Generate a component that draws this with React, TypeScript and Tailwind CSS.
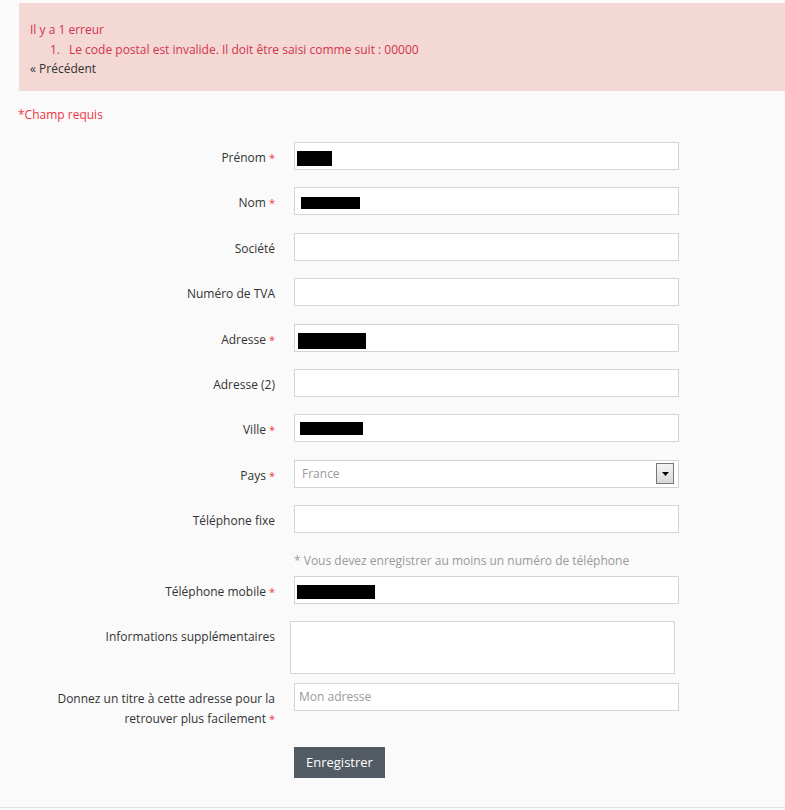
import React from "react";

const font = { fontFamily: '"Open Sans", "Liberation Sans", sans-serif' };

function Star() {
  return <span className="text-[#f13340] text-[11px] align-top ml-[3px]">*</span>;
}

function Row({
  label,
  required,
  children,
  className = "",
}: {
  label: React.ReactNode;
  required?: boolean;
  children: React.ReactNode;
  className?: string;
}) {
  return (
    <div className={"flex items-start " + className}>
      <div className="w-[225px] shrink-0 text-right pt-[6px] leading-[20px] text-[#333]">
        {label}
        {required && <Star />}
      </div>
      <div className="ml-[19px]">{children}</div>
    </div>
  );
}

function Input({ redact, placeholder }: { redact?: [number, number, number, number]; placeholder?: string }) {
  return (
    <div className="relative w-[385px] h-[28px] bg-white border border-[#d6d4d4] flex items-center pl-[7px] text-[#999]">
      {placeholder}
      {redact && (
        <div
          className="absolute bg-black"
          style={{ left: redact[0], top: redact[1], width: redact[2], height: redact[3] }}
        />
      )}
    </div>
  );
}

export default function App() {
  return (
    <div className="min-h-[810px] w-[785px] bg-[#fafafa] text-[12px]" style={font}>
      <div className="pt-[3px] pl-[19px]">
        <div className="bg-[#f3d8d3] h-[88px] pl-[11px] pt-[17px] leading-[19.5px]">
          <div className="text-[#d0344d]">Il y a 1 erreur</div>
          <ol className="text-[#d0344d] pl-[20px]">
            <li className="flex">
              <span className="w-[19px]">1.</span>
              <span>Le code postal est invalide. Il doit être saisi comme suit : 00000</span>
            </li>
          </ol>
          <div className="text-[#333]">« Précédent</div>
        </div>
      </div>
      <div className="pl-[18px] mt-[14px] text-[#f13340] leading-[20px]">*Champ requis</div>

      <div className="pl-[50px] mt-[17px] flex flex-col">
        <Row label="Prénom" required className="mb-[17px]">
          <Input redact={[2, 8, 35, 15]} />
        </Row>
        <Row label="Nom" required className="mb-[18px]">
          <Input redact={[6, 9, 59, 12]} />
        </Row>
        <Row label="Société" className="mb-[17px]">
          <Input />
        </Row>
        <Row label="Numéro de TVA" className="mb-[18px]">
          <Input />
        </Row>
        <Row label="Adresse" required className="mb-[17px]">
          <Input redact={[3, 8, 68, 16]} />
        </Row>
        <Row label="Adresse (2)" className="mb-[17px]">
          <Input />
        </Row>
        <Row label="Ville" required className="mb-[18px]">
          <Input redact={[5, 7, 63, 13]} />
        </Row>
        <Row label="Pays" required className="mb-[17px]">
          <div className="relative w-[385px] h-[28px] bg-white border border-[#d6d4d4] flex items-center pl-[7px] text-[#999]">
            France
            <div className="absolute right-[4px] top-[2px] w-[18px] h-[21px] border border-[#777] bg-gradient-to-b from-[#f4f4f4] to-[#d8d8d8] flex items-center justify-center">
              <svg width="7" height="4" viewBox="0 0 7 4">
                <path d="M0 0H7L3.5 4Z" fill="#000" />
              </svg>
            </div>
          </div>
        </Row>
        <Row label="Téléphone fixe" className="mb-[17px]">
          <Input />
        </Row>
        <div className="pl-[244px] text-[#999] leading-[20px] pt-[1px] mb-[5px]">
          * Vous devez enregistrer au moins un numéro de téléphone
        </div>
        <Row label="Téléphone mobile" required className="mb-[17px]">
          <Input redact={[2, 8, 78, 14]} />
        </Row>
        <Row label="Informations supplémentaires" className="mb-[9px]">
          <div className="-ml-[4px] w-[385px] h-[53px] bg-white border border-[#d6d4d4]" />
        </Row>
        <Row
          label={
            <>
              Donnez un titre à cette adresse pour la
              <br />
              retrouver plus facilement
            </>
          }
          required
          className="mb-[18px]"
        >
          <div className="w-[385px] h-[28px] bg-white border border-[#d6d4d4] flex items-center pl-[4px] text-[#999]">
            Mon adresse
          </div>
        </Row>
        <div className="pl-[244px]">
          <button className="bg-[#525a63] text-white text-[13px] h-[31px] px-[12px] leading-[31px]">
            Enregistrer
          </button>
        </div>
      </div>
      <div className="mt-[29px] border-b border-[#e2e2e2]" />
    </div>
  );
}
